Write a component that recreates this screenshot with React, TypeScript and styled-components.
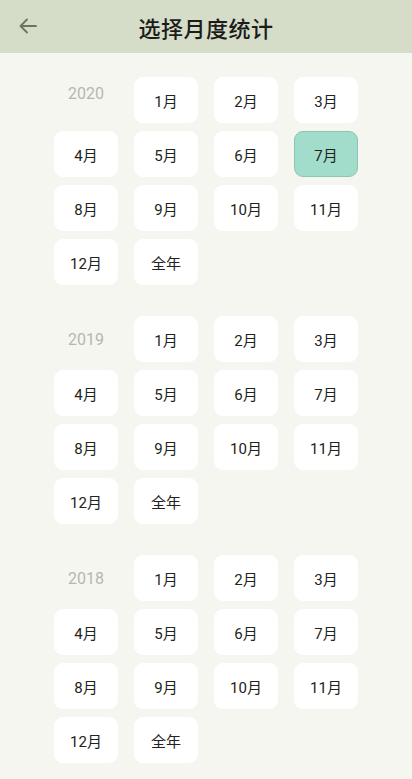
import styled, { createGlobalStyle } from "styled-components"

const GlobalStyle = createGlobalStyle`
  html, body {
    margin: 0;
    padding: 0;
    background: #f6f6f1;
  }
  body {
    font-family: Roboto, "Noto Sans CJK SC", sans-serif;
  }
`

const MONTHS = ["1月", "2月", "3月", "4月", "5月", "6月", "7月", "8月", "9月", "10月", "11月", "12月", "全年"]

const YEARS = [
  { year: 2020, selected: "7月", raised: true },
  { year: 2019, selected: "", raised: false },
  { year: 2018, selected: "", raised: false },
]

const BackIcon = () => (
  <svg width="18" height="16" viewBox="0 0 18 16" fill="none">
    <path
      d="M17 8H2M8 1.5L1.5 8L8 14.5"
      stroke="#6c7362"
      strokeWidth="1.8"
      strokeLinecap="round"
      strokeLinejoin="round"
    />
  </svg>
)

const App = () => {
  return (
    <Page>
      <GlobalStyle />
      <Header>
        <BackButton>
          <BackIcon />
        </BackButton>
        <Title>选择月度统计</Title>
      </Header>
      <List>
        {YEARS.map(({ year, selected, raised }) => (
          <YearGrid key={year}>
            <YearLabel raised={raised}>{year}</YearLabel>
            {MONTHS.map((m) => (
              <MonthCell key={m} active={m === selected}>
                {m}
              </MonthCell>
            ))}
          </YearGrid>
        ))}
      </List>
    </Page>
  )
}

export default App

const Page = styled.div`
  min-height: 779px;
  background: #f6f6f1;
  display: flex;
  flex-direction: column;
`
const Header = styled.div`
  position: relative;
  height: 53px;
  background: #d5dcc8;
  display: flex;
  align-items: center;
  justify-content: center;
`
const BackButton = styled.div`
  position: absolute;
  left: 19px;
  top: 18px;
  display: flex;
`
const Title = styled.div`
  font-family: "Noto Sans CJK SC", sans-serif;
  font-size: 22px;
  font-weight: 500;
  color: #1c1c1a;
  letter-spacing: 0.5px;
`
const List = styled.div`
  display: flex;
  flex-direction: column;
  gap: 31px;
  padding: 24px 54px 18px;
`
const YearGrid = styled.div`
  display: grid;
  grid-template-columns: repeat(4, 64px);
  grid-auto-rows: 46px;
  column-gap: 16px;
  row-gap: 8px;
`
const YearLabel = styled.div<{ raised: boolean }>`
  display: flex;
  align-items: center;
  justify-content: center;
  padding-bottom: ${(p) => (p.raised ? "14px" : "0")};
  font-size: 16px;
  color: #b6b6ad;
`
const MonthCell = styled.div<{ active: boolean }>`
  box-sizing: border-box;
  display: flex;
  align-items: center;
  justify-content: center;
  border-radius: 9px;
  font-size: 15px;
  color: #222320;
  background: ${(p) => (p.active ? "#a2dccb" : "#ffffff")};
  border: ${(p) => (p.active ? "1.5px solid #8ac6b3" : "none")};
`
